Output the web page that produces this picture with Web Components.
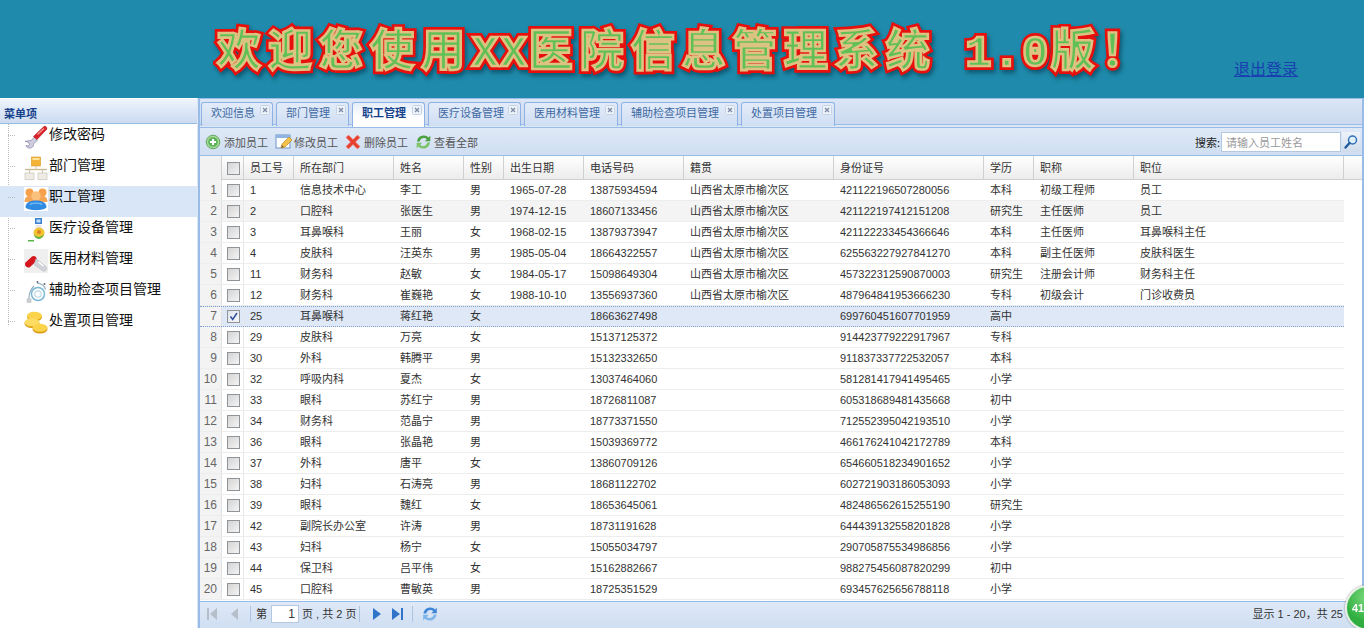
<!DOCTYPE html>
<html lang="zh">
<head>
<meta charset="utf-8">
<title>XX医院信息管理系统</title>
<style>
  html, body { margin: 0; height: 628px; overflow: hidden; background: #fff; }
  body { font: 12px "Liberation Sans", "Noto Sans CJK SC", sans-serif; color: #333; }
  main-page { height: 628px; }
</style>
</head>
<body>
<main-page>
  <app-banner slot="banner"></app-banner>
  <side-menu slot="menu"></side-menu>
  <tab-bar slot="tabs"></tab-bar>
  <grid-toolbar slot="toolbar"></grid-toolbar>
  <staff-grid slot="grid"></staff-grid>
  <grid-pager slot="pager"></grid-pager>
</main-page>
<notice-badge>41</notice-badge>

<script>
const SWOOSH_A = 'M1.500 7.500C2 3.500 5 1.500 8.500 1.500c2 0 3.500.8 4.500 2L14.800 1.700v5.500H9.300l2-2C10.500 4.300 9.500 3.900 8.300 3.900 6 3.900 4.700 5.300 4.300 7.500z';
const SWOOSH_B = 'M14.500 8.500C14 12.500 11 14.500 7.500 14.500c-2 0-3.500-.8-4.500-2L1.200 14.300V8.800h5.500l-2 2c.8.900 1.800 1.300 3 1.300 2.300 0 3.600-1.400 4-3.600z';

const ICONS = {
  wrench: `<svg width="24" height="24" viewBox="0 0 24 24"><path d="M1.500 16l3 1.500 1 2-1 1.500-2.500-.5c.5 2.500 4.500 3.500 6.500 1.500 1-1 1-2.500 1.500-3.500l3.500-3.500-3-3-3.500 3.500c-1 .5-2.500 0-4 .5-1 .3-1.500 .5-1.500 1z" fill="#cfcce0" stroke="#8f8aa8" stroke-width=".8"/><path d="M9.500 11.500L20 1.500c1.500-1 3.500 1 2.700 2.700L13 14.500z" fill="#dc2228" stroke="#a81418" stroke-width=".6"/><path d="M13.500 9.500L20 3.500" stroke="#f59a9a" stroke-width="1.200"/></svg>`,
  org: `<svg width="24" height="24" viewBox="0 0 24 24"><rect x="7.500" y="1" width="9" height="9" fill="#f4b43a" stroke="#d99a22" stroke-width=".6"/><rect x="8.500" y="2" width="7" height="2" fill="#fde39a"/><path d="M1 13.500h22" stroke="#c9b68e" stroke-width="1.300"/><path d="M12 10v3.500M5.500 13.500v4M18.500 13.500v4" stroke="#c9c2b0" stroke-width="1"/><rect x="1" y="17" width="9" height="6.500" fill="#efece6" stroke="#c8c4ba" stroke-width=".7"/><rect x="14" y="17" width="9" height="6.500" fill="#efece6" stroke="#c8c4ba" stroke-width=".7"/></svg>`,
  staff: `<svg width="24" height="24" viewBox="0 0 24 24"><rect width="24" height="24" fill="#fff"/><circle cx="5.500" cy="5.500" r="4" fill="#f6a24c"/><circle cx="18.500" cy="5.500" r="4" fill="#f6a24c"/><path d="M.5 15c0-4 2-6 5-6h13c3 0 5 2 5 6z" fill="#f4a556"/><circle cx="12" cy="9" r="4.800" fill="#fac07e"/><path d="M1.500 20.500c0-5 4.500-7 10.500-7s10.500 2 10.500 7c-3 3.500-18 3.500-21 0z" fill="#2f8ae2"/><path d="M6 17.500c2-1.800 10-1.800 12 0" stroke="#7cc0f5" stroke-width="1.300" fill="none"/></svg>`,
  device: `<svg width="24" height="24" viewBox="0 0 24 24"><rect x="11" y="0" width="7" height="6" fill="#3d7fd0"/><rect x="12.500" y="1.500" width="4" height="3" fill="#bfe0fb"/><path d="M11.500 7h6v3h-6z" fill="#e8e8e8"/><circle cx="15" cy="15" r="5.500" fill="#f2c230"/><path d="M10 16c3 4.500 7 3.500 10 0-1 6-9 7-10 0z" fill="#5ab548"/><circle cx="15" cy="14" r="2" fill="#d98324"/><rect x="4" y="22" width="6" height="1.500" fill="#5ab548"/></svg>`,
  pill: `<svg width="24" height="24" viewBox="0 0 24 24"><rect width="24" height="24" fill="#f0efef"/><path d="M1.500 13.500L8 7.500c2.500-2 6.500 2 4.500 4.500L6 18c-2.500 2-6.500-2-4.500-4.500z" fill="#d4151c"/><path d="M12 9.500l10 8c1.800 2 0 5.500-3 4.500l-9-6.500z" fill="#d0d3d9" stroke="#b0b4bb" stroke-width=".5"/><path d="M14.500 13l5 4" stroke="#fff" stroke-width="1.400"/></svg>`,
  scope: `<svg width="24" height="24" viewBox="0 0 24 24" fill="none"><circle cx="14" cy="14" r="6.500" stroke="#7cb7d6" stroke-width="1.500"/><circle cx="14" cy="14" r="3.200" stroke="#bcd8e8" stroke-width="1.200"/><path d="M13 3c4 .5 7.500 2.500 8.500 6.500M10 6C7 9 5 13 5 18" stroke="#8aa9ba" stroke-width="1.100"/><rect x="2.500" y="18" width="5" height="5" rx="1.500" fill="#c9ced3"/><circle cx="13.500" cy="2" r="1" fill="#667"/><circle cx="20.500" cy="4" r="1" fill="#667"/></svg>`,
  coins: `<svg width="24" height="24" viewBox="0 0 24 24"><ellipse cx="10.500" cy="6" rx="7.500" ry="4.500" fill="#dd9c10"/><ellipse cx="10.500" cy="4.800" rx="7.500" ry="4" fill="#fbd34a"/><ellipse cx="8" cy="12.500" rx="7.500" ry="4.500" fill="#dd9c10"/><ellipse cx="8" cy="11.300" rx="7.500" ry="4" fill="#fcdc62"/><ellipse cx="16" cy="18" rx="7.500" ry="4.500" fill="#d89810"/><ellipse cx="16" cy="16.800" rx="7.500" ry="4" fill="#fbd34a"/></svg>`,
  add: `<svg width="16" height="16" viewBox="0 0 16 16"><circle cx="8" cy="8" r="6.800" fill="#a4d896" stroke="#6aa862"/><circle cx="8" cy="8" r="4.800" fill="#5fb35a"/><path d="M8 5v6M5 8h6" stroke="#fff" stroke-width="2"/></svg>`,
  edit: `<svg width="18" height="18" viewBox="0 0 18 18"><rect x="1" y="2" width="14" height="13" fill="#fff" stroke="#6d93c4"/><rect x="1" y="2" width="14" height="3" fill="#8fb4e2"/><path d="M6 15l1-4 7-7 3 3-7 7z" fill="#f1c14b" stroke="#c08a1e" stroke-width=".7"/><path d="M6 15l1-3 2 2z" fill="#8a6a3a"/></svg>`,
  del: `<svg width="16" height="16" viewBox="0 0 16 16"><path d="M1 3.500L3.500 1 8 5.500 12.500 1 15 3.500 10.500 8l4.500 4.500-2.500 2.500L8 10.500 3.500 15 1 12.500 5.500 8z" fill="#e8402f" stroke="#f08a7e" stroke-width=".5"/></svg>`,
  all: `<svg width="17" height="16" viewBox="0 0 16 16"><path d="${SWOOSH_A}" fill="#4ea143"/><path d="${SWOOSH_B}" fill="#7cc36a"/></svg>`,
  search: `<svg width="16" height="16" viewBox="0 0 16 16" fill="none"><circle cx="9.500" cy="6" r="4" fill="#dff0fb" stroke="#2f6fb5" stroke-width="1.500"/><path d="M6.500 9l-4 4.500" stroke="#1f5a9e" stroke-width="2.400" stroke-linecap="round"/></svg>`,
  first: `<svg width="12" height="14" viewBox="0 0 12 14"><rect x="1" y="1" width="2" height="12" fill="#b5bec9"/><path d="M11 1v12L4 7z" fill="#b5bec9"/></svg>`,
  prev: `<svg width="10" height="14" viewBox="0 0 10 14"><path d="M8 1v12L1 7z" fill="#b5bec9"/></svg>`,
  next: `<svg width="10" height="14" viewBox="0 0 10 14"><path d="M1 1v12l8-6z" fill="#2f74c8"/></svg>`,
  last: `<svg width="12" height="14" viewBox="0 0 12 14"><path d="M0 1v12l8-6z" fill="#2f74c8"/><rect x="9" y="1" width="2" height="12" fill="#2f74c8"/></svg>`,
  reload: `<svg width="16" height="16" viewBox="0 0 16 16"><path d="${SWOOSH_A}" fill="#3f86d6"/><path d="${SWOOSH_B}" fill="#7db4ea"/></svg>`
};

const PLACE = '山西省太原市榆次区';
// staffId, dept, name, sex, birth, phone, place, idCard, edu, title, job
const STAFF = [
  [1, '信息技术中心', '李工', '男', '1965-07-28', '13875934594', PLACE, '421122196507280056', '本科', '初级工程师', '员工'],
  [2, '口腔科', '张医生', '男', '1974-12-15', '18607133456', PLACE, '421122197412151208', '研究生', '主任医师', '员工'],
  [3, '耳鼻喉科', '王丽', '女', '1968-02-15', '13879373947', PLACE, '421122233454366646', '本科', '主任医师', '耳鼻喉科主任'],
  [4, '皮肤科', '汪英东', '男', '1985-05-04', '18664322557', PLACE, '625563227927841270', '本科', '副主任医师', '皮肤科医生'],
  [11, '财务科', '赵敏', '女', '1984-05-17', '15098649304', PLACE, '457322312590870003', '研究生', '注册会计师', '财务科主任'],
  [12, '财务科', '崔巍艳', '女', '1988-10-10', '13556937360', PLACE, '487964841953666230', '专科', '初级会计', '门诊收费员'],
  [25, '耳鼻喉科', '蒋红艳', '女', '', '18663627498', '', '699760451607701959', '高中', '', ''],
  [29, '皮肤科', '万亮', '女', '', '15137125372', '', '914423779222917967', '专科', '', ''],
  [30, '外科', '韩腾平', '男', '', '15132332650', '', '911837337722532057', '本科', '', ''],
  [32, '呼吸内科', '夏杰', '女', '', '13037464060', '', '581281417941495465', '小学', '', ''],
  [33, '眼科', '苏红宁', '男', '', '18726811087', '', '605318689481435668', '初中', '', ''],
  [34, '财务科', '范晶宁', '男', '', '18773371550', '', '712552395042193510', '小学', '', ''],
  [36, '眼科', '张晶艳', '男', '', '15039369772', '', '466176241042172789', '本科', '', ''],
  [37, '外科', '唐平', '女', '', '13860709126', '', '654660518234901652', '小学', '', ''],
  [38, '妇科', '石涛亮', '男', '', '18681122702', '', '602721903186053093', '小学', '', ''],
  [39, '眼科', '魏红', '女', '', '18653645061', '', '482486562615255190', '研究生', '', ''],
  [42, '副院长办公室', '许涛', '男', '', '18731191628', '', '644439132558201828', '小学', '', ''],
  [43, '妇科', '杨宁', '女', '', '15055034797', '', '290705875534986856', '小学', '', ''],
  [44, '保卫科', '吕平伟', '女', '', '15162882667', '', '988275456087820299', '初中', '', ''],
  [45, '口腔科', '曹敏英', '男', '', '18725351529', '', '693457625656788118', '小学', '', '']
];

class MainPage extends HTMLElement {
  constructor() {
    super();
    this.attachShadow({ mode: 'open' }).innerHTML = `
      <style>
        :host { display: flex; flex-direction: column; background: #cfdef2; }
        .body { flex: 1; display: flex; min-height: 0; }
        .left { width: 197px; flex: none; background: #fff; }
        .right {
          flex: 1; min-width: 0; display: flex; flex-direction: column;
          border-left: 2px solid #99bbe8; border-right: 2px solid #99bbe8;
          background: #cfdef2;
        }
        .gap { height: 2px; flex: none; background: #dce7f6; border-bottom: 1px solid #99bbe8; }
        .left-edge { width: 1px; flex: none; background: #dce7f6; }
      </style>
      <slot name="banner"></slot>
      <div class="body">
        <div class="left"><slot name="menu"></slot></div>
        <div class="left-edge"></div>
        <div class="right">
          <slot name="tabs"></slot>
          <div class="gap"></div>
          <slot name="toolbar"></slot>
          <slot name="grid"></slot>
          <slot name="pager"></slot>
        </div>
      </div>`;
  }
}

class AppBanner extends HTMLElement {
  constructor() {
    super();
    // latin runs are half width in the reference, so they get a mono face
    const runs = [['欢迎您使用'], ['XX', 'lat'], ['医院信息管理系统'], [' 1.0', 'lat'], ['版！']];
    const title = runs.map(([t, c]) => `<span class="run ${c || ''}" data-text="${t}">${t}</span>`).join('');
    this.attachShadow({ mode: 'open' }).innerHTML = `
      <style>
        :host {
          display: flex; height: 98px; flex: none; box-sizing: border-box;
          background: #1f8aab; padding: 19px 0 0 217px;
        }
        .title {
          height: 56px; white-space: pre; width: 1017px;
          font: 700 44px/56px "Noto Sans CJK SC", sans-serif; letter-spacing: 7px;
          filter: drop-shadow(2px 3px 2px rgba(0, 50, 70, .55));
        }
        .run {
          position: relative; display: inline-block; color: #dcc283;
          -webkit-text-stroke: 8px #e8100c; paint-order: stroke fill;
        }
        .lat { font-family: "Liberation Mono", monospace; letter-spacing: 2px; }
        .run::after {
          content: attr(data-text); position: absolute; left: 0; top: 0;
          color: #5fc155; -webkit-text-stroke: 2.6px #dcc283; paint-order: fill stroke;
        }
        a {
          margin-top: 38px; height: 22px; font: 16px/22px "Noto Sans CJK SC", sans-serif;
          color: #1a3fb0; text-decoration: underline; white-space: nowrap;
        }
      </style>
      <div class="title">${title}</div>
      <a href="#">退出登录</a>`;
  }
}

class SideMenu extends HTMLElement {
  constructor() {
    super();
    this.attachShadow({ mode: 'open' }).innerHTML = `
      <style>
        :host { display: block; }
        .head {
          height: 25px; box-sizing: border-box; margin-top: 1px; padding: 8px 0 0 4px;
          background: linear-gradient(#f0f5fc 0, #dfe9f7 40%, #cddcf1 100%);
          border-bottom: 1px solid #99bbe8;
          font: bold 11px/12px "Noto Sans CJK SC", sans-serif; color: #15428b;
        }
        .tree {
          position: relative;
          background-image: repeating-linear-gradient(#bbb 0 1px, transparent 1px 2px);
          background-size: 1px 201px; background-position: 8px 0; background-repeat: no-repeat;
        }
      </style>
      <div class="head">菜单项</div>
      <div class="tree">
        <menu-item icon="wrench">修改密码</menu-item>
        <menu-item icon="org">部门管理</menu-item>
        <menu-item icon="staff" selected>职工管理</menu-item>
        <menu-item icon="device">医疗设备管理</menu-item>
        <menu-item icon="pill">医用材料管理</menu-item>
        <menu-item icon="scope">辅助检查项目管理</menu-item>
        <menu-item icon="coins">处置项目管理</menu-item>
      </div>`;
  }
}

class MenuItem extends HTMLElement {
  connectedCallback() {
    const icon = ICONS[this.getAttribute('icon')];
    this.attachShadow({ mode: 'open' }).innerHTML = `
      <style>
        :host {
          display: flex; height: 31px; box-sizing: border-box; padding-left: 24px; overflow: hidden;
          font: 14px/14px "Noto Sans CJK SC", sans-serif; color: #111;
          background-image: repeating-linear-gradient(90deg, #bbb 0 1px, transparent 1px 2px);
          background-size: 7px 1px; background-position: 8px 11px; background-repeat: no-repeat;
        }
        :host([selected]) { background-color: #d9e6f8; }
        svg { display: block; flex: none; }
        .icon { width: 24px; height: 24px; flex: none; margin-top: 1px; margin-right: 1px; }
        .text { padding-top: 2px; white-space: nowrap; }
      </style>
      <div class="icon">${icon}</div>
      <div class="text"><slot></slot></div>`;
  }
}

class TabBar extends HTMLElement {
  constructor() {
    super();
    this.attachShadow({ mode: 'open' }).innerHTML = `
      <style>
        :host {
          display: flex; flex: none; height: 27px; box-sizing: border-box;
          gap: 3px; padding: 3px 0 0 1px;
          background: linear-gradient(#dbe6f6, #cbdaf0);
          border-top: 1px solid #99bbe8;
          border-bottom: 1px solid #99bbe8;
        }
      </style>
      <tab-item w="72">欢迎信息</tab-item>
      <tab-item w="73">部门管理</tab-item>
      <tab-item w="73" active>职工管理</tab-item>
      <tab-item w="93">医疗设备管理</tab-item>
      <tab-item w="94">医用材料管理</tab-item>
      <tab-item w="117">辅助检查项目管理</tab-item>
      <tab-item w="94">处置项目管理</tab-item>`;
  }
}

class TabItem extends HTMLElement {
  connectedCallback() {
    this.style.width = this.getAttribute('w') + 'px';
    this.attachShadow({ mode: 'open' }).innerHTML = `
      <style>
        :host {
          display: block; position: relative; box-sizing: border-box; height: 24px;
          padding: 2px 0 0 9px; white-space: nowrap;
          border: 1px solid #8db2e3; border-bottom: 0; border-radius: 3px 3px 0 0;
          background: linear-gradient(#e3ecf9, #cfdef3);
          font: 11px/14px "Noto Sans CJK SC", sans-serif; color: #416aa3;
        }
        :host([active]) {
          height: 25px; background: linear-gradient(#e6eefa, #fff 60%);
          font-weight: bold; color: #15428b;
        }
        svg { position: absolute; right: 2px; top: 2px; }
      </style>
      <slot></slot>
      <svg width="10" height="10" viewBox="0 0 10 10"><rect x=".5" y=".5" width="9" height="9" rx="1" fill="#eef2f9" stroke="#c6d3e6"/><path d="M3 3l4 4M7 3l-4 4" stroke="#7b8ba5" stroke-width="1.300"/></svg>`;
  }
}

class GridToolbar extends HTMLElement {
  constructor() {
    super();
    this.attachShadow({ mode: 'open' }).innerHTML = `
      <style>
        :host {
          display: flex; flex: none; height: 28px; box-sizing: border-box; align-items: center;
          padding: 0 2px 0 5px; background: linear-gradient(#dfe9f7, #cfdef2);
          border-bottom: 1px solid #99bbe8;
          font: 11px/14px "Noto Sans CJK SC", sans-serif; color: #555;
        }
        .search { margin-left: auto; display: flex; align-items: center; color: #222; }
        .label { margin-right: 1px; }
        .input {
          width: 120px; height: 20px; box-sizing: border-box; background: #fff;
          border: 1px solid #b5c8e0; padding-left: 4px; line-height: 18px; color: #999;
        }
        .btn { width: 18px; height: 20px; margin-left: 1px; display: flex; align-items: center; justify-content: center; background: linear-gradient(#eef3fa, #cfdcec); }
      </style>
      <tool-button icon="add">添加员工</tool-button>
      <tool-button icon="edit">修改员工</tool-button>
      <tool-button icon="del">删除员工</tool-button>
      <tool-button icon="all">查看全部</tool-button>
      <div class="search">
        <span class="label">搜索:</span>
        <div class="input">请输入员工姓名</div>
        <div class="btn">${ICONS.search}</div>
      </div>`;
  }
}

class ToolButton extends HTMLElement {
  connectedCallback() {
    this.attachShadow({ mode: 'open' }).innerHTML = `
      <style>
        :host { display: flex; align-items: center; width: 70px; white-space: nowrap; }
        .icon { width: 18px; height: 18px; display: flex; align-items: center; flex: none; margin-right: 1px; }
      </style>
      <div class="icon">${ICONS[this.getAttribute('icon')]}</div><slot></slot>`;
  }
}

class StaffGrid extends HTMLElement {
  constructor() {
    super();
    const cols = ['员工号', '所在部门', '姓名', '性别', '出生日期', '电话号码', '籍贯', '身份证号', '学历', '职称', '职位'];
    const head = cols.map(c => `<div class="hd">${c}</div>`).join('');
    const rows = STAFF.map((r, i) => {
      const cls = i === 1 ? 'row alt' : i === 6 ? 'row sel' : 'row';
      const cells = r.map(v => `<div class="td">${v}</div>`).join('');
      return `<div class="${cls}"><div class="num">${i + 1}</div><div class="chk"><span class="box${i === 6 ? ' on' : ''}">${i === 6 ? '<svg width="9" height="9" viewBox="0 0 9 9"><path d="M1.500 4.500l2.200 3L8 1" fill="none" stroke="#2f4f9f" stroke-width="1.500"/></svg>' : ''}</span></div>${cells}</div>`;
    }).join('');
    this.attachShadow({ mode: 'open' }).innerHTML = `
      <style>
        :host {
          display: block; flex: none; height: 445px; background: #fff; overflow: hidden;
          --cols: 22px 22px 50px 100px 70px 40px 80px 100px 150px 150px 50px 100px 210px;
          font: 11px/14px "Liberation Sans", "Noto Sans CJK SC", sans-serif; color: #333;
        }
        .head, .row { display: grid; grid-template-columns: var(--cols); width: 1144px; }
        .head {
          width: auto; grid-template-columns: var(--cols) 1fr; height: 24px; box-sizing: border-box;
          background: linear-gradient(#fff, #ececec); border-bottom: 1px solid #d0d0d0;
        }
        .hd, .corner { border-right: 1px solid #d0d0d0; padding-left: 6px; line-height: 24px; box-sizing: border-box; }
        .corner { padding: 0 0 0 1px; display: flex; align-items: center; justify-content: center; }
        .corner:first-child { background: #f2f2f2; }
        .row { height: 21px; box-sizing: border-box; border-bottom: 1px solid #ededed; line-height: 20px; }
        .row.alt { background: #f4f4f4; }
        .row.sel { background: #dfe8f6; border-top: 1px dotted #7f9fca; border-bottom: 1px dotted #7f9fca; line-height: 19px; }
        .num {
          background: #f3f3f3; border-right: 1px solid #e2e2e2; text-align: right; padding-right: 4px;
          font-size: 12px; color: #666; box-sizing: border-box;
        }
        .chk { display: flex; align-items: center; justify-content: center; padding-left: 1px; border-right: 1px solid #e8e8e8; box-sizing: border-box; }
        .td { padding-left: 6px; white-space: nowrap; overflow: hidden; box-sizing: border-box; }
        .box {
          width: 13px; height: 13px; box-sizing: border-box; display: flex; align-items: center; justify-content: center;
          border: 1px solid #8f9499; background: linear-gradient(135deg, #d4d4d4, #f4f4f4);
        }
        .box.on { background: linear-gradient(135deg, #dfe3ea, #f6f7fa); }
      </style>
      <div class="head"><div class="corner"></div><div class="corner"><span class="box"></span></div>${head}<div></div></div>
      ${rows}`;
  }
}

class GridPager extends HTMLElement {
  constructor() {
    super();
    this.attachShadow({ mode: 'open' }).innerHTML = `
      <style>
        :host {
          display: flex; flex: none; align-items: center; height: 28px; box-sizing: border-box;
          padding: 0 0 3px 6px; background: linear-gradient(#dfe9f7, #cfdef2);
          border-top: 1px solid #99bbe8; color: #333;
          font: 11px/14px "Liberation Sans", "Noto Sans CJK SC", sans-serif;
        }
        .i { display: flex; flex: none; }
        .sep { width: 1px; height: 16px; background: #aec4e0; flex: none; }
        .input {
          width: 28px; height: 18px; box-sizing: border-box; border: 1px solid #b5c8e0; background: #fff;
          text-align: right; padding-right: 3px; line-height: 16px; margin: 0 3px 0 4px; font-size: 12px;
        }
        .info { margin-left: auto; padding-right: 19px; white-space: nowrap; }
      </style>
      <span class="i" style="margin-right:12px">${ICONS.first}</span>
      <span class="i" style="margin-right:10px">${ICONS.prev}</span>
      <span class="sep" style="margin-right:5px"></span>
      <span>第</span><div class="input">1</div><span>页 , 共 2 页</span>
      <span class="sep" style="margin:0 12px 0 3px"></span>
      <span class="i" style="margin-right:10px">${ICONS.next}</span>
      <span class="i" style="margin-right:8px">${ICONS.last}</span>
      <span class="sep" style="margin-right:9px"></span>
      <span class="i">${ICONS.reload}</span>
      <div class="info">显示 1 - 20，共 25</div>`;
  }
}

class NoticeBadge extends HTMLElement {
  constructor() {
    super();
    this.attachShadow({ mode: 'open' }).innerHTML = `
      <style>
        :host {
          position: fixed; left: 1345px; top: 585px; width: 46px; height: 46px; box-sizing: border-box;
          border-radius: 50%; border: 2px solid #e6efe6;
          background: radial-gradient(circle at 50% 25%, #7fdc7f, #2fae3f 65%);
          box-shadow: 0 0 2px rgba(0,0,0,.5);
          font: bold 11px/42px "Liberation Sans", sans-serif; color: #fff; padding-left: 5px;
        }
      </style>
      <slot></slot>`;
  }
}

customElements.define('main-page', MainPage);
customElements.define('app-banner', AppBanner);
customElements.define('side-menu', SideMenu);
customElements.define('menu-item', MenuItem);
customElements.define('tab-bar', TabBar);
customElements.define('tab-item', TabItem);
customElements.define('grid-toolbar', GridToolbar);
customElements.define('tool-button', ToolButton);
customElements.define('staff-grid', StaffGrid);
customElements.define('grid-pager', GridPager);
customElements.define('notice-badge', NoticeBadge);
</script>
</body>
</html>
